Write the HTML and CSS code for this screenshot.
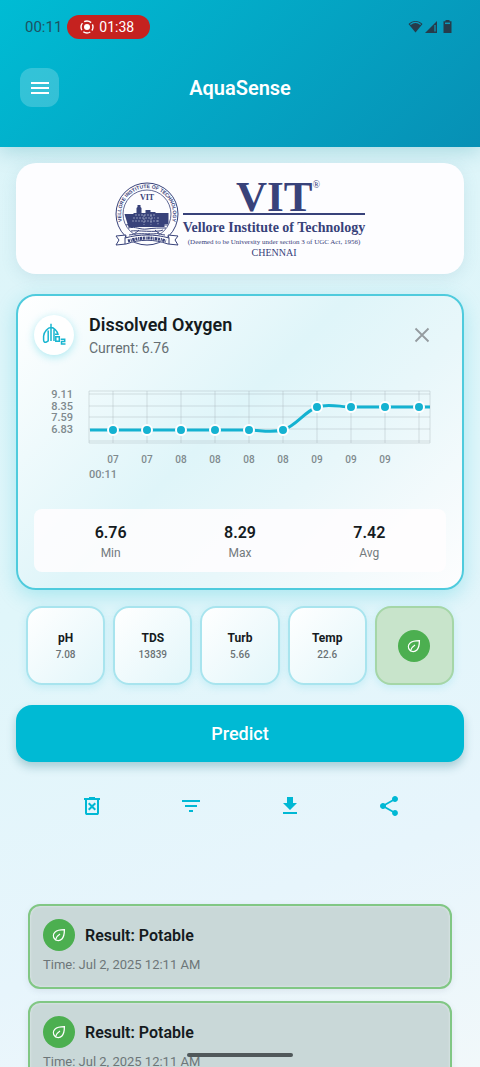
FILE: index.html
```html
<!DOCTYPE html>
<html lang="en">
<head>
<meta charset="utf-8">
<meta name="viewport" content="width=device-width, initial-scale=1">
<title>AquaSense</title>
<link rel="stylesheet" href="styles.css">
</head>
<body>
<svg class="defs" aria-hidden="true">
  <symbol id="leaf" viewBox="0 0 16 16">
    <path d="M13.400 2.600C9.500 2.600 6 3.100 4 5.100c-2 2-2.100 5-.2 7 2 2 5 2 7.100-.1 2-2 2.500-5.500 2.500-9.400z"/>
    <path d="M4.200 13.200C5 10.500 6.600 8.400 9 7"/>
  </symbol>
</svg>
<div class="app">
  <header class="top">
    <div class="status">
      <span class="clock">00:11</span>
      <span class="recording">
        <svg width="14" height="14" viewBox="0 0 14 14"><circle cx="7" cy="7" r="3" fill="#fff"/><circle cx="7" cy="7" r="6" fill="none" stroke="#fff" stroke-width="1.400" stroke-dasharray="7.400 2.025" stroke-dashoffset="3.700"/></svg>
        01:38
      </span>
      <span class="signals">
        <svg width="15" height="13" viewBox="0 0 15 13"><path d="M7.500 12.500.5 4C4.500.1 10.500.1 14.500 4z" fill="#263c4b"/><path d="M2.300 4.400c3.100-2.500 7.300-2.500 10.400 0" fill="none" stroke="#0b9bbd" stroke-width="1.300"/></svg>
        <svg width="12" height="12" viewBox="0 0 12 12"><path d="M12 0v12H0z" fill="#263c4b"/><path d="M10 4v6.500" stroke="#0b9bbd" stroke-width="1.200"/></svg>
        <svg class="battery" width="9" height="13" viewBox="0 0 9 13"><path d="M2.500 0h4v1.200H8.500V13H.5V1.200h2z" fill="#263c4b"/><path d="M2 3.300h5" stroke="#0b9bbd" stroke-width="1.500"/></svg>
      </span>
    </div>
    <div class="bar">
      <button class="menu" aria-label="Menu"><svg width="24" height="24" viewBox="0 0 24 24"><path d="M3 6h18v2H3zm0 5h18v2H3zm0 5h18v2H3z" fill="#fff"/></svg></button>
      <h1>AquaSense</h1>
    </div>
  </header>

  <main>
    <section class="brand">
      <svg class="seal" width="64" height="68" viewBox="0 0 64 68" role="img" aria-label="Vellore Institute of Technology seal">
        <defs><path id="ring" d="M12.700 50.500A26 26 0 1 1 51.300 50.500"/></defs>
        <g fill="none" stroke="#38427a"><circle cx="32" cy="33" r="31"/><circle cx="32" cy="33" r="24" stroke-width=".8"/></g>
        <text class="ring-text"><textPath href="#ring" startOffset="50%">VELLORE INSTITUTE OF TECHNOLOGY</textPath></text>
        <text class="seal-name" x="32" y="19">VIT</text>
        <path d="M9.500 33h9v-1h3v-5l1-1v-2h3v2l1 1v5h4v-3h5v2h5v1h13v11h-4v3h-36z" fill="#38427a"/>
        <path d="M20 34h20M18 37h22M17 40h26M29 34v10M36 34v10M43 36v8" stroke="#c8cce0" stroke-width=".6" stroke-dasharray="2 1"/>
        <path d="M11 44c7-2 14 3 21 1s14-1 21-1M13 47c8-2 12 2 19 1s12-1 19-1M16 50c5-1 26 2 32-1M20 53c8-1 18 1 24-1M27 55l8-2" fill="none" stroke="#38427a"/>
        <path d="M1 55l10-1-1 3c14-4 30-4 44 0l-1-3 10 1-3 4 3 5-10-1c-14-5-28-5-42 0l-10 1 3-5z" fill="#fff" stroke="#38427a"/>
        <path d="M10 57v6M54 57v6M14 54c4 0 7-2 10-5M50 54c-4 0-7-2-10-5" fill="none" stroke="#38427a"/>
        <path d="M13 60q19-6 38 0" fill="none" stroke="#38427a" stroke-width="3" stroke-dasharray="2 .8 1 .6 2.500 .7"/>
      </svg>
      <div class="brand-text">
        <div class="brand-vit">VIT<sup>®</sup></div>
        <div class="brand-name">Vellore Institute of Technology</div>
        <div class="brand-note">(Deemed to be University under section 3 of UGC Act, 1956)</div>
        <div class="brand-city">CHENNAI</div>
      </div>
    </section>

    <section class="reading">
      <div class="reading-head">
        <span class="reading-icon">
          <svg width="24" height="24" viewBox="0 0 24 24" fill="none" stroke="#18b5d0" stroke-width="1.500"><path d="M9 .8V18M9 4.500C6 4.500 1.800 9 1.600 13v4c0 2 1.300 2.700 2.800 2l1.800-1.200V7.500M9 4.500c3 0 6.300 3.500 7 6.800h-3M12 6.500V18"/><path d="M13.800 13.800h3.500v4.400h-3.500zM18.700 16.200h4v2.300h-3.200v2.500H23.500"/></svg>
        </span>
        <div class="reading-title">
          <h2>Dissolved Oxygen</h2>
          <p>Current: 6.76</p>
        </div>
        <button class="close" aria-label="Close"><svg width="24" height="24" viewBox="0 0 24 24"><path d="M5.500 5.500l13 13m0-13l-13 13" stroke="#949b9f" stroke-width="1.800"/></svg></button>
      </div>
      <svg class="chart" viewBox="0 0 412 100" role="img" aria-label="Dissolved oxygen over time">
        <path class="grid" d="M79 6V58M113 6V58M147 6V58M181 6V58M215 6V58M249 6V58M283 6V58M317 6V58M351 6V58M385 6V58M55 9H396M55 21H396M55 32H396M55 44H396M55 56H396M55 6H396V58H55z"/>
        <path class="line" d="M56 45H215C226 45 236 48 249 45C262 41 270 27 283 22C294 18 306 22 317 22H396"/>
        <g class="dots"><circle cx="79" cy="45" r="5"/><circle cx="113" cy="45" r="5"/><circle cx="147" cy="45" r="5"/><circle cx="181" cy="45" r="5"/><circle cx="215" cy="45" r="5"/><circle cx="249" cy="45" r="5"/><circle cx="283" cy="22" r="5"/><circle cx="317" cy="22" r="5"/><circle cx="351" cy="22" r="5"/><circle cx="385" cy="22" r="5"/></g>
        <g class="y-labels"><text x="39" y="13">9.11</text><text x="39" y="25">8.35</text><text x="39" y="36">7.59</text><text x="39" y="48">6.83</text></g>
        <g class="x-labels"><text x="79" y="78">07</text><text x="113" y="78">07</text><text x="147" y="78">08</text><text x="181" y="78">08</text><text x="215" y="78">08</text><text x="249" y="78">08</text><text x="283" y="78">09</text><text x="317" y="78">09</text><text x="351" y="78">09</text></g>
        <text class="start" x="55" y="93">00:11</text>
      </svg>
      <dl class="stats">
        <div><dd>6.76</dd><dt>Min</dt></div>
        <div><dd>8.29</dd><dt>Max</dt></div>
        <div><dd>7.42</dd><dt>Avg</dt></div>
      </dl>
    </section>

    <section class="tiles">
      <button class="tile"><b>pH</b><span>7.08</span></button>
      <button class="tile"><b>TDS</b><span>13839</span></button>
      <button class="tile"><b>Turb</b><span>5.66</span></button>
      <button class="tile"><b>Temp</b><span>22.6</span></button>
      <button class="tile tile-ok" aria-label="Potable"><span class="badge"><svg><use href="#leaf"/></svg></span></button>
    </section>

    <button class="predict">Predict</button>

    <nav class="actions">
      <button aria-label="Delete all"><svg viewBox="0 -960 960 960"><path d="m376-300 104-104 104 104 56-56-104-104 104-104-56-56-104 104-104-104-56 56 104 104-104 104 56 56Zm-96 180q-33 0-56.500-23.500T200-200v-520h-40v-80h200v-40h240v40h200v80h-40v520q0 33-23.500 56.500T680-120H280Zm400-600H280v520h400v-520Z"/></svg></button>
      <button aria-label="Filter"><svg viewBox="0 0 24 24"><path d="M10 18h4v-2h-4v2zM3 6v2h18V6H3zm3 7h12v-2H6v2z"/></svg></button>
      <button aria-label="Download"><svg viewBox="0 0 24 24"><path d="M5 20h14v-2H5v2zM19 9h-4V3H9v6H5l7 7 7-7z"/></svg></button>
      <button aria-label="Share"><svg viewBox="0 0 24 24"><path d="M18 16.080c-.76 0-1.440.3-1.960.77L8.910 12.700c.05-.23.09-.46.09-.7s-.04-.47-.09-.7l7.050-4.110c.54.5 1.250.81 2.040.81 1.660 0 3-1.340 3-3s-1.340-3-3-3-3 1.340-3 3c0 .24.04.47.09.7L8.040 9.810C7.500 9.310 6.790 9 6 9c-1.660 0-3 1.340-3 3s1.340 3 3 3c.79 0 1.500-.31 2.040-.81l7.120 4.160c-.05.21-.08.43-.08.65 0 1.610 1.310 2.920 2.920 2.920s2.920-1.310 2.920-2.920-1.310-2.920-2.920-2.920z"/></svg></button>
    </nav>

    <section class="results">
      <article class="result">
        <div class="result-head"><span class="badge"><svg><use href="#leaf"/></svg></span><h3>Result: Potable</h3></div>
        <p>Time: Jul 2, 2025 12:11 AM</p>
      </article>
      <article class="result">
        <div class="result-head"><span class="badge"><svg><use href="#leaf"/></svg></span><h3>Result: Potable</h3></div>
        <p>Time: Jul 2, 2025 12:11 AM</p>
      </article>
    </section>
  </main>
  <div class="home-indicator"></div>
</div>
</body>
</html>
```

FILE: styles.css
```css
* { box-sizing: border-box; }

body,
h1,
h2,
h3,
p,
dl,
dd { margin: 0; }

body {
  font-family: Roboto, "Liberation Sans", sans-serif;
  color: #151b1e;
}

button {
  font: inherit;
  color: inherit;
  background: none;
  border: 0;
  padding: 0;
}

svg { flex: none; }

.defs {
  position: absolute;
  width: 0;
  height: 0;
}

.app {
  display: flex;
  flex-direction: column;
  height: 100vh;
  overflow: hidden;
  background: linear-gradient(160deg, #dbf4f8 0%, #e0f6fa 50%, #e7f5fc 80%, #f1f8fa 100%);
}

.top {
  flex: none;
  padding: 14px 20px 40px;
  background: linear-gradient(135deg, #00bcd4, #0790b5);
  box-shadow: 0 4px 20px rgba(0, 130, 150, .25);
}

.status {
  display: flex;
  align-items: center;
  gap: 5px;
  height: 25px;
  padding: 0 8px 0 5px;
  font-size: 15px;
}

.clock { color: #1e5262; }

.recording {
  display: flex;
  align-items: center;
  gap: 5px;
  height: 24px;
  padding: 0 16px 0 13px;
  border-radius: 12px;
  background: #c5221f;
  color: #fff;
  font-size: 14px;
}

.signals {
  display: flex;
  align-items: center;
  gap: 2px;
  margin-left: auto;
}

.battery { margin-left: 4px; }

.bar {
  display: grid;
  grid-template-columns: 39px 1fr 39px;
  align-items: center;
  margin-top: 29px;
}

.menu {
  display: grid;
  place-items: center;
  height: 39px;
  border-radius: 12px;
  background: rgba(255, 255, 255, .2);
}

h1 {
  text-align: center;
  font-size: 20px;
  font-weight: 600;
  line-height: 24px;
}

.bar h1 { color: #fff; }

main {
  display: flex;
  flex-direction: column;
  flex: 1;
  min-height: 0;
  padding: 16px 16px 0;
}

.brand {
  display: flex;
  flex: none;
  justify-content: center;
  gap: 4px;
  padding: 18px 12px 16px;
  border-radius: 20px;
  background: #fdfdff;
  box-shadow: 0 4px 16px rgba(80, 140, 160, .14);
  color: #38427a;
  font-family: "Liberation Serif", serif;
  text-align: center;
}

.seal-name {
  fill: #38427a;
  font: bold 8px "Liberation Serif", serif;
  text-anchor: middle;
}

.ring-text {
  fill: #38427a;
  font: bold 5px "Liberation Sans", sans-serif;
  text-anchor: middle;
}

.brand-vit {
  display: flex;
  justify-content: center;
  padding-left: 8px;
  border-bottom: 2px solid #38427a;
  font-size: 43px;
  font-weight: bold;
  line-height: 32px;
}

.brand-vit sup {
  font-size: 10px;
  font-weight: normal;
  line-height: 8px;
}

.brand-name {
  padding-top: 4px;
  font-size: 14px;
  font-weight: bold;
  line-height: 18px;
}

.brand-note {
  font-size: 7px;
  line-height: 10px;
}

.brand-city {
  font-size: 10px;
  line-height: 11px;
}

.reading {
  flex: none;
  margin-top: 20px;
  padding: 16px;
  border: 2px solid #4fcbdd;
  border-radius: 20px;
  background: linear-gradient(135deg, #fff 0%, #dff5f9 45%, #e8f7fa 65%, #fdfdfe 100%);
  box-shadow: 0 6px 20px rgba(0, 188, 212, .25);
}

.reading-head {
  display: flex;
  align-items: center;
}

.reading-icon {
  display: grid;
  place-items: center;
  width: 40px;
  height: 40px;
  border-radius: 50%;
  background: #fff;
  box-shadow: 0 2px 8px rgba(0, 188, 212, .3);
}

.reading-title {
  flex: 1;
  margin-left: 15px;
}

h2 {
  font-size: 18px;
  font-weight: 600;
  line-height: 26px;
}

.reading-title p {
  color: #666f73;
  font-size: 14px;
  line-height: 20px;
}

.close {
  display: grid;
  place-items: center;
  width: 48px;
  height: 46px;
}

.chart {
  display: block;
  width: 100%;
  margin-top: 27px;
}

.grid {
  fill: none;
  stroke: #9aa9ad;
  stroke-opacity: .35;
  stroke-width: 1;
}

.line {
  fill: none;
  stroke: #14b2d1;
  stroke-width: 3;
}

.dots {
  fill: #14b2d1;
  stroke: #fff;
  stroke-width: 2;
}

.chart text {
  fill: #7f8a8e;
  font-size: 11px;
  font-weight: 500;
}

.y-labels { text-anchor: end; }

.x-labels { text-anchor: middle; }

.chart .x-labels text { font-size: 10px; }

.stats {
  display: flex;
  justify-content: space-around;
  margin-top: 24px;
  padding: 13px 12px 10px;
  border-radius: 8px;
  background: rgba(255, 253, 254, .85);
  text-align: center;
}

.stats div {
  display: flex;
  flex-direction: column;
}

.stats dd {
  font-size: 16px;
  font-weight: 600;
  line-height: 22px;
}

.stats dt {
  color: #737a7d;
  font-size: 12px;
  line-height: 18px;
}

.tiles {
  display: grid;
  flex: none;
  grid-template-columns: repeat(5, 1fr);
  gap: 8px;
  margin-top: 16px;
  padding: 0 10px;
}

.tile {
  display: flex;
  flex-direction: column;
  align-items: center;
  justify-content: center;
  aspect-ratio: 1;
  border: 2px solid #a8e4ee;
  border-radius: 16px;
  background: linear-gradient(135deg, #fff, #e2f6fa);
  box-shadow: 0 2px 8px rgba(0, 188, 212, .15);
}

.tile b {
  font-size: 12px;
  font-weight: 700;
  line-height: 18px;
}

.tile > span:not(.badge) {
  color: #6a7275;
  font-size: 10px;
  font-weight: 500;
  line-height: 16px;
}

.tile-ok {
  border-color: #a5d6a7;
  background: #c8e4cb;
}

.badge {
  display: grid;
  place-items: center;
  width: 32px;
  height: 32px;
  border-radius: 50%;
  background: #4caf50;
}

.badge svg {
  width: 16px;
  height: 16px;
  fill: none;
  stroke: #fff;
  stroke-width: 1.3px;
}

.predict {
  flex: none;
  height: 57px;
  margin-top: 20px;
  border-radius: 16px;
  background: #00bad4;
  box-shadow: 0 5px 10px rgba(0, 100, 120, .28);
  color: #fff;
  font-size: 18px;
  font-weight: 500;
}

.actions {
  display: grid;
  flex: none;
  grid-template-columns: repeat(4, 1fr);
  margin-top: 20px;
  padding: 0 26px;
}

.actions button {
  display: grid;
  place-items: center;
  height: 48px;
}

.actions svg {
  width: 24px;
  height: 24px;
  fill: #00b8d4;
}

.results {
  display: flex;
  flex: 1;
  flex-direction: column;
  gap: 12px;
  min-height: 0;
  margin-top: 62px;
  padding: 12px 12px 0;
  overflow: auto;
  scrollbar-width: none;
}

.result {
  flex: none;
  padding: 13px 13px 12px;
  border: 2px solid #81c784;
  border-radius: 12px;
  background: #c9d8d8;
  box-shadow: 0 2px 6px rgba(100, 110, 140, .12), inset 0 0 3px rgba(255, 255, 255, .5);
}

.result-head {
  display: flex;
  align-items: center;
  gap: 10px;
}

h3 {
  font-size: 16px;
  font-weight: 600;
}

.result p {
  margin-top: 4px;
  color: #6d7678;
  font-size: 13px;
  line-height: 20px;
}

.home-indicator {
  position: fixed;
  bottom: 10px;
  left: 50%;
  width: 106px;
  height: 4px;
  margin-left: -53px;
  border-radius: 2px;
  background: #50585a;
}
```
